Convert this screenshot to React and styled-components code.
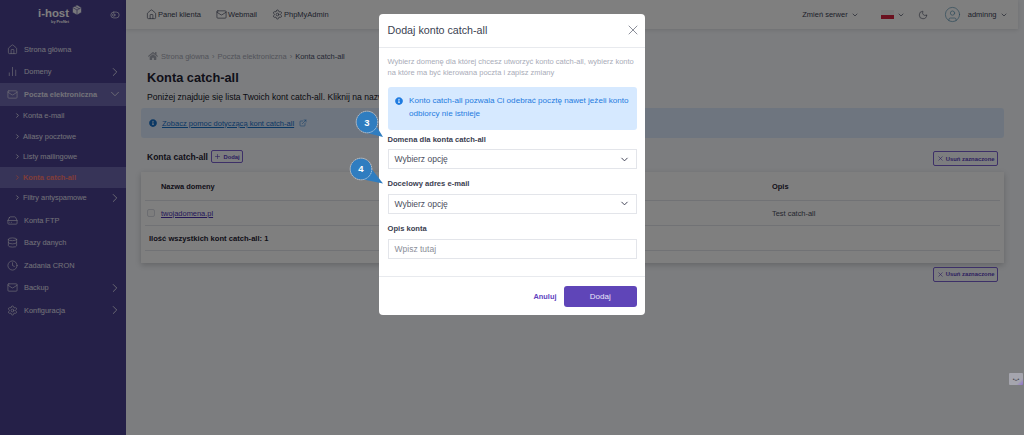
import React from "react";
import styled, { createGlobalStyle } from "styled-components";
import {
    Home,
    BarChart2,
    Mail,
    ChevronRight,
    ChevronDown,
    HardDrive,
    Database,
    Clock,
    Settings,
    X,
    Plus,
    ExternalLink,
    Moon,
    ToggleLeft,
    CircleUser,
    Package,
} from "lucide-react";
import { FaHome, FaInfoCircle } from "react-icons/fa";

const GlobalStyle = createGlobalStyle`
    html, body {
        margin: 0;
        padding: 0;
        height: 435px;
        overflow: hidden;
        background: #f8fafe;
        font-family: "Liberation Sans", Arial, sans-serif;
    }
    * { box-sizing: border-box; }
    svg { flex: none; }
`;

const Page = styled.div`
    display: flex;
    width: 1024px;
    height: 435px;
    position: relative;
    overflow: hidden;
`;

const Sidebar = styled.aside`
    width: 126px;
    flex: none;
    background: #4a4090;
    color: #e4e2f0;
    display: flex;
    flex-direction: column;
`;

const Brand = styled.div`
    height: 38px;
    display: flex;
    padding: 6px 0 0 38px;
    position: relative;
`;

const Logo = styled.div`
    color: #fff;
    font-size: 11.4px;
    font-weight: 700;
    line-height: 14px;
    display: flex;
    flex-direction: column;
    align-items: flex-end;
    width: 31px;
    & small {
        font-size: 3.8px;
        font-weight: 700;
        line-height: 5px;
        margin-top: -0.5px;
    }
`;

const LogoCube = styled.span`
    margin: -2px 0 0 2px;
    display: flex;
`;

const SideToggle = styled.span`
    position: absolute;
    left: 110px;
    top: 9.5px;
    display: flex;
`;

const Menu = styled.nav`
    display: flex;
    flex-direction: column;
`;

const MainItem = styled.div`
    height: 22.5px;
    display: flex;
    align-items: center;
    padding: 0 4px 0 7px;
    gap: 6px;
    font-size: 7.4px;
    white-space: nowrap;
    font-weight: ${(p) => (p.$active ? 700 : 400)};
    background: ${(p) => (p.$active ? "#6f68b0" : "transparent")};
`;

const SubList = styled.div`
    display: flex;
    flex-direction: column;
    padding-bottom: 1px;
`;

const SubItem = styled.div`
    height: 20.5px;
    display: flex;
    align-items: center;
    padding: 0 4px 0 13.5px;
    gap: 2.5px;
    font-size: 7.4px;
    white-space: nowrap;
    font-weight: ${(p) => (p.$active ? 700 : 400)};
    color: ${(p) => (p.$active ? "#ff7a70" : "#e4e2f0")};
    background: ${(p) => (p.$active ? "#6f68b0" : "transparent")};
`;

const MenuArrow = styled(ChevronRight)`
    margin-left: auto;
`;

const MenuCaret = styled(ChevronDown)`
    margin-left: auto;
`;

const MainColumn = styled.div`
    flex: 1;
    min-width: 0;
    display: flex;
    flex-direction: column;
`;

const TopBar = styled.header`
    height: 29px;
    width: 892px;
    flex: none;
    background: #fff;
    box-shadow: 0 1px 4px rgba(0, 0, 0, 0.12);
    display: flex;
    align-items: center;
    padding: 0 10.5px 0 20px;
    font-size: 7.5px;
    color: #3a3f55;
`;

const TopLink = styled.span`
    display: flex;
    align-items: center;
    gap: 1px;
    margin-right: 15px;
`;

const TopRight = styled.div`
    margin-left: auto;
    display: flex;
    align-items: center;
    gap: 3px;
`;

const Flag = styled.span`
    width: 13px;
    height: 9px;
    display: block;
    background: linear-gradient(#f2f2f2 50%, #d4213d 50%);
    margin-left: 19px;
`;

const ThemeIcon = styled(Moon)`
    margin: 0 13px 0 10px;
`;

const Avatar = styled.span`
    display: flex;
    color: #5f97b5;
    margin-right: 4px;
`;

const Content = styled.main`
    padding: 20px 20px 0 15px;
    display: flex;
    flex-direction: column;
`;

const Crumbs = styled.div`
    display: flex;
    align-items: center;
    gap: 3px;
    font-size: 7.5px;
    color: #a5a8b4;
    height: 14px;
    padding-left: 7px;
    & b {
        font-weight: 400;
        color: #4a4f68;
    }
`;

const Title = styled.h1`
    margin: 6px 0 0;
    font-size: 12.8px;
    line-height: 17px;
    font-weight: 700;
    color: #1f2233;
    padding-left: 6px;
`;

const Lead = styled.p`
    margin: 4px 0 0;
    font-size: 8.6px;
    line-height: 14px;
    color: #14161f;
    padding-left: 6px;
    white-space: nowrap;
`;

const HelpBox = styled.div`
    margin-top: 4px;
    height: 30px;
    border-radius: 3px;
    background: #dcebff;
    display: flex;
    align-items: center;
    gap: 5px;
    padding-left: 8px;
    color: #1670c9;
    font-size: 7.55px;
    & span {
        text-decoration: underline;
    }
`;

const SectionRow = styled.div`
    margin-top: 11px;
    height: 15px;
    display: flex;
    align-items: center;
    padding-left: 6px;
    font-size: 8.5px;
    font-weight: 700;
    color: #1f2233;
`;

const OutlineButton = styled.span`
    display: inline-flex;
    align-items: center;
    justify-content: center;
    gap: 2px;
    border: 1px solid #7a60d0;
    border-radius: 2px;
    color: #5b3fbe;
    font-size: 5.85px;
    font-weight: 700;
    height: ${(p) => p.$h || 14.5}px;
    padding: 0 2.5px;
    margin-left: ${(p) => (p.$right ? "auto" : "3px")};
    margin-right: ${(p) => (p.$right ? "6px" : 0)};
    margin-top: ${(p) => p.$top || 0}px;
`;

const Card = styled.section`
    margin-top: 8px;
    height: 91px;
    background: #fff;
    box-shadow: 0 2px 6px rgba(0, 0, 0, 0.2);
    padding: 0 4px;
    font-size: 7.45px;
    color: #1f2233;
`;

const TableRow = styled.div`
    display: grid;
    grid-template-columns: 16px 611px 1fr;
    align-items: center;
    border-bottom: 1px solid #e2e4ea;
    font-weight: ${(p) => (p.$head ? 700 : 400)};
    height: ${(p) => (p.$head ? "29px" : "25px")};
`;

const Check = styled.span`
    width: 8px;
    height: 8px;
    border: 1px solid #d8dae2;
    border-radius: 2px;
    background: #fafafa;
    margin-left: 2px;
`;

const DomainLink = styled.span`
    color: #4b2fb0;
    text-decoration: underline;
`;

const Muted = styled.span`
    color: #4a4f60;
`;

const Summary = styled.div`
    height: 25px;
    display: flex;
    align-items: center;
    font-size: 7.6px;
    font-weight: 700;
    padding-left: 4px;
    border-bottom: 1px solid #e2e4ea;
`;

const BottomActions = styled.div`
    display: flex;
    margin-top: 4px;
`;

const Overlay = styled.div`
    position: absolute;
    inset: 0;
    background: rgba(0, 0, 0, 0.5);
    display: flex;
    justify-content: center;
    padding-top: 14px;
`;

const Modal = styled.div`
    width: 266px;
    height: 301px;
    background: #fff;
    border-radius: 4px;
    display: flex;
    flex-direction: column;
`;

const ModalHead = styled.div`
    height: 33.5px;
    flex: none;
    display: flex;
    align-items: center;
    justify-content: space-between;
    padding: 0 4px 0 8.5px;
    border-bottom: 1px solid #e8eaee;
    font-size: 10.7px;
    color: #3c3f52;
`;

const ModalBody = styled.div`
    padding: 8px 8px 0 8.5px;
    flex: 1;
`;

const Intro = styled.p`
    margin: 0;
    font-size: 7.5px;
    line-height: 11.5px;
    color: #a9acb8;
`;

const InfoBox = styled.div`
    margin-top: 8.5px;
    height: 42.5px;
    background: #d6e9ff;
    border-radius: 3px;
    display: flex;
    gap: 6px;
    padding: 8.4px 7px 0 7.5px;
    color: #1f7be0;
    font-size: 8.1px;
    line-height: 12.4px;
    & svg {
        margin-top: 1.5px;
    }
`;

const Field = styled.div`
    display: flex;
    flex-direction: column;
    margin-top: ${(p) => p.$top || 9}px;
`;

const Label = styled.label`
    font-size: 7.6px;
    font-weight: 700;
    line-height: 11px;
    color: #3a3d50;
    margin-bottom: 4.7px;
`;

const Control = styled.div`
    height: ${(p) => p.$h || 20}px;
    border: 1px solid #e3e5ea;
    display: flex;
    align-items: center;
    justify-content: space-between;
    padding: 0 6px 0 6px;
    background: #fff;
    font-size: 8.5px;
    color: ${(p) => (p.$placeholder ? "#8b8e99" : "#4a4d5c")};
`;

const ModalFoot = styled.div`
    height: 39px;
    flex: none;
    border-top: 1px solid #e8eaee;
    display: flex;
    align-items: center;
    justify-content: flex-end;
    padding: 0 8px;
    gap: 7px;
`;

const Cancel = styled.span`
    color: #5f45c0;
    font-size: 7.4px;
    font-weight: 700;
`;

const Primary = styled.span`
    width: 73.5px;
    height: 21px;
    border-radius: 3px;
    background: #5f45b8;
    color: #e8e4f8;
    font-size: 8px;
    display: flex;
    align-items: center;
    justify-content: center;
`;

const CalloutBox = styled.div`
    position: absolute;
    left: ${(p) => p.$x}px;
    top: ${(p) => p.$y}px;
    width: 34px;
    height: 34px;
    & svg {
        position: absolute;
        inset: 0;
    }
    & span {
        position: absolute;
        left: 0;
        top: 0;
        width: 24px;
        height: 24px;
        display: flex;
        align-items: center;
        justify-content: center;
        color: #fff;
        font-size: 9.5px;
        font-weight: 700;
    }
`;

const Widget = styled.div`
    position: absolute;
    left: 1009px;
    top: 372.5px;
    width: 14px;
    height: 12px;
    border-radius: 1px;
    background: linear-gradient(135deg, #a5a5ae 72%, #9070d0);
    color: #4a4a52;
    font-size: 5px;
    font-weight: 700;
    display: flex;
    align-items: center;
    justify-content: center;
`;

const Callout = ({ n, x, y, tail }) => (
    <CalloutBox $x={x} $y={y}>
        <svg width="34" height="34" viewBox="0 0 34 34">
            <path d={tail} fill="#2f7dc0" />
            <circle cx="12" cy="12" r="10.6" fill="#2f7dc0" />
            <circle cx="12" cy="12" r="10.8" fill="none" stroke="#d4dce4" strokeWidth="0.8" strokeDasharray="1.4 0.6" />
        </svg>
        <span>{n}</span>
    </CalloutBox>
);

const sw = 1.4;

const App = () => {
    return (
        <Page>
            <GlobalStyle />
            <Sidebar>
                <Brand>
                    <Logo>
                        i-host
                        <small>by ProNet</small>
                    </Logo>
                    <LogoCube>
                        <Package size={12} color="#4a4090" fill="#f0f0f6" strokeWidth={1.2} />
                    </LogoCube>
                    <SideToggle>
                        <ToggleLeft size={10} strokeWidth={1.8} />
                    </SideToggle>
                </Brand>
                <Menu>
                    <MainItem>
                        <Home size={11} strokeWidth={sw} />
                        Strona główna
                    </MainItem>
                    <MainItem>
                        <BarChart2 size={11} strokeWidth={sw} />
                        Domeny
                        <MenuArrow size={14} strokeWidth={1.5} />
                    </MainItem>
                    <MainItem $active>
                        <Mail size={11} strokeWidth={sw} />
                        Poczta elektroniczna
                        <MenuCaret size={14} strokeWidth={1.5} />
                    </MainItem>
                    <SubList>
                        <SubItem>
                            <ChevronRight size={7} strokeWidth={3} />
                            Konta e-mail
                        </SubItem>
                        <SubItem>
                            <ChevronRight size={7} strokeWidth={3} />
                            Aliasy pocztowe
                        </SubItem>
                        <SubItem>
                            <ChevronRight size={7} strokeWidth={3} />
                            Listy mailingowe
                        </SubItem>
                        <SubItem $active>
                            <ChevronRight size={7} strokeWidth={3} />
                            Konta catch-all
                        </SubItem>
                        <SubItem>
                            <ChevronRight size={7} strokeWidth={3} />
                            Filtry antyspamowe
                            <MenuArrow size={14} strokeWidth={1.5} />
                        </SubItem>
                    </SubList>
                    <MainItem>
                        <HardDrive size={11} strokeWidth={sw} />
                        Konta FTP
                    </MainItem>
                    <MainItem>
                        <Database size={11} strokeWidth={sw} />
                        Bazy danych
                    </MainItem>
                    <MainItem>
                        <Clock size={11} strokeWidth={sw} />
                        Zadania CRON
                    </MainItem>
                    <MainItem>
                        <Mail size={11} strokeWidth={sw} />
                        Backup
                        <MenuArrow size={14} strokeWidth={1.5} />
                    </MainItem>
                    <MainItem>
                        <Settings size={11} strokeWidth={sw} />
                        Konfiguracja
                        <MenuArrow size={14} strokeWidth={1.5} />
                    </MainItem>
                </Menu>
            </Sidebar>
            <MainColumn>
                <TopBar>
                    <TopLink>
                        <Home size={11} strokeWidth={sw} />
                        Panel klienta
                    </TopLink>
                    <TopLink>
                        <Mail size={11} strokeWidth={sw} />
                        Webmail
                    </TopLink>
                    <TopLink>
                        <Settings size={11} strokeWidth={sw} />
                        PhpMyAdmin
                    </TopLink>
                    <TopRight>
                        Zmień serwer
                        <ChevronDown size={8} strokeWidth={2} />
                        <Flag />
                        <ChevronDown size={8} strokeWidth={2} />
                        <ThemeIcon size={10} strokeWidth={sw} />
                        <Avatar>
                            <CircleUser size={17} strokeWidth={1} />
                        </Avatar>
                        adminng
                        <ChevronDown size={8} strokeWidth={2} />
                    </TopRight>
                </TopBar>
                <Content>
                    <Crumbs>
                        <FaHome size={10} color="#a5a8b4" />
                        <span>Strona główna</span>
                        <span>›</span>
                        <span>Poczta elektroniczna</span>
                        <span>›</span>
                        <b>Konta catch-all</b>
                    </Crumbs>
                    <Title>Konta catch-all</Title>
                    <Lead>Poniżej znajduje się lista Twoich kont catch-all. Kliknij na nazwę</Lead>
                    <HelpBox>
                        <FaInfoCircle size={8} />
                        <span>Zobacz pomoc dotyczącą kont catch-all</span>
                        <ExternalLink size={8} strokeWidth={1.5} />
                    </HelpBox>
                    <SectionRow>
                        Konta catch-all
                        <OutlineButton $h={12.5}>
                            <Plus size={7} strokeWidth={2} />
                            Dodaj
                        </OutlineButton>
                        <OutlineButton $right $top={4}>
                            <X size={7} strokeWidth={2} />
                            Usuń zaznaczone
                        </OutlineButton>
                    </SectionRow>
                    <Card>
                        <TableRow $head>
                            <span />
                            <span>Nazwa domeny</span>
                            <span>Opis</span>
                        </TableRow>
                        <TableRow>
                            <Check />
                            <DomainLink>twojadomena.pl</DomainLink>
                            <Muted>Test catch-all</Muted>
                        </TableRow>
                        <Summary>Ilość wszystkich kont catch-all: 1</Summary>
                    </Card>
                    <BottomActions>
                        <OutlineButton $right>
                            <X size={7} strokeWidth={2} />
                            Usuń zaznaczone
                        </OutlineButton>
                    </BottomActions>
                </Content>
            </MainColumn>
            <Overlay>
                <Modal>
                    <ModalHead>
                        Dodaj konto catch-all
                        <X size={16} strokeWidth={1.3} color="#7a7d8a" />
                    </ModalHead>
                    <ModalBody>
                        <Intro>
                            Wybierz domenę dla której chcesz utworzyć konto catch-all, wybierz konto na które ma być
                            kierowana poczta i zapisz zmiany
                        </Intro>
                        <InfoBox>
                            <FaInfoCircle size={8} />
                            <span>Konto catch-all pozwala Ci odebrać pocztę nawet jeżeli konto odbiorcy nie istnieje</span>
                        </InfoBox>
                        <Field $top={4}>
                            <Label>Domena dla konta catch-all</Label>
                            <Control>
                                Wybierz opcję
                                <ChevronDown size={11} strokeWidth={2} color="#33364a" />
                            </Control>
                        </Field>
                        <Field>
                            <Label>Docelowy adres e-mail</Label>
                            <Control>
                                Wybierz opcję
                                <ChevronDown size={11} strokeWidth={2} color="#33364a" />
                            </Control>
                        </Field>
                        <Field>
                            <Label>Opis konta</Label>
                            <Control $h={20.5} $placeholder>
                                Wpisz tutaj
                            </Control>
                        </Field>
                    </ModalBody>
                    <ModalFoot>
                        <Cancel>Anuluj</Cancel>
                        <Primary>Dodaj</Primary>
                    </ModalFoot>
                </Modal>
                <Callout n="3" x={355} y={110} tail="M14 4 L28 27 L8 22 Z" />
                <Callout n="4" x={349} y={156.5} tail="M18 6 L34 26.5 L12 22 Z" />
            </Overlay>
            <Widget>•ᴗ•</Widget>
        </Page>
    );
};

export default App;
